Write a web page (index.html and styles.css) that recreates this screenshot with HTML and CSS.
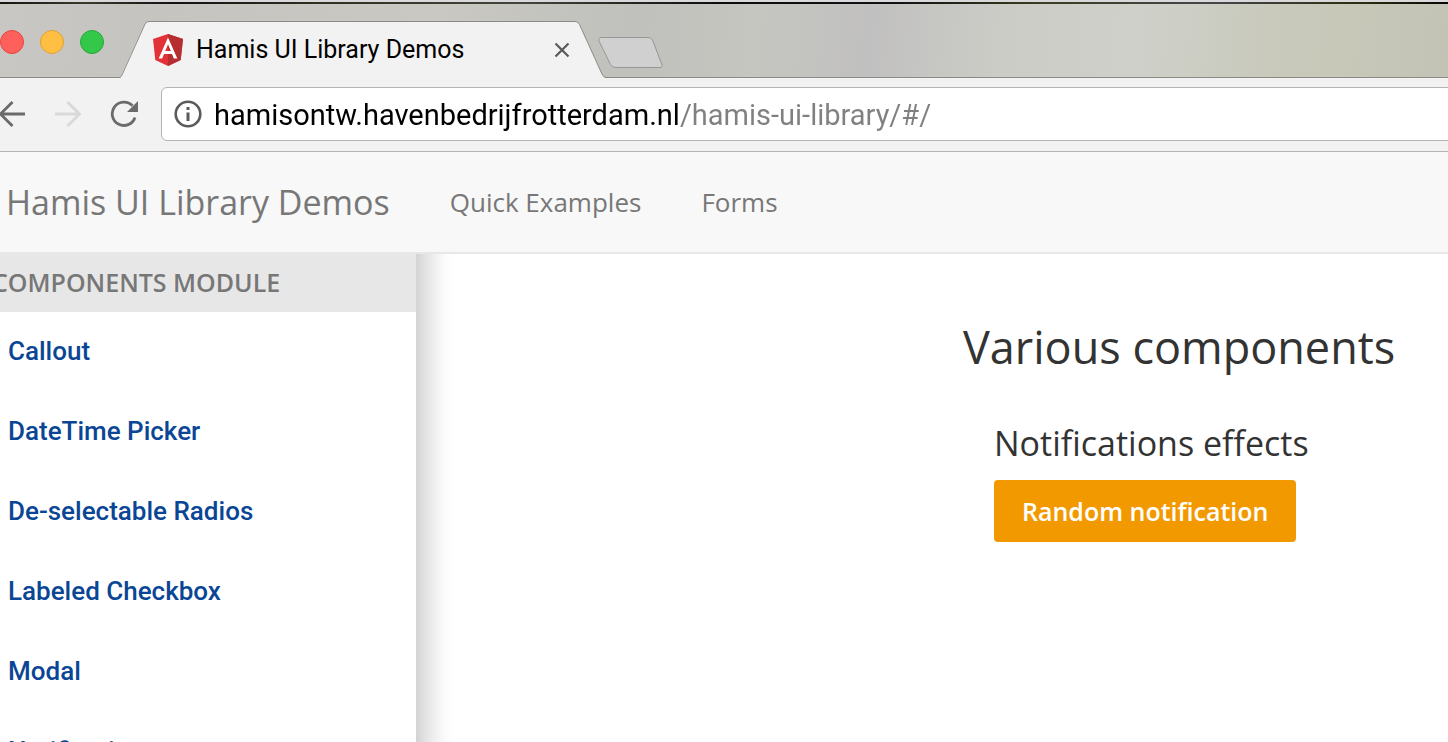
FILE: index.html
```
<!DOCTYPE html>
<html lang="en">

<head>
    <meta charset="UTF-8">
    <title>Hamis UI Library Demos</title>
    <link rel="stylesheet" href="styles.css">
</head>

<body>

    <div class="desktop"></div>

    <div class="titlebar">
        <div class="lights">
            <button class="light red" aria-label="Close"></button>
            <button class="light yellow" aria-label="Minimize"></button>
            <button class="light green" aria-label="Zoom"></button>
        </div>
        <div class="tab">
            <svg class="tab-shape" viewBox="0 0 486 57" preserveAspectRatio="none">
                <path d="M0 57 L24 4 Q25.500 .5 29 .5 H455 Q458.500 .5 460 4 L482 53 Q484 56.500 486 57 Z" fill="#f2f2f2" />
                <path d="M0 56.500 Q1 56 2 54 L25 3 Q26 .5 29 .5 H455 Q458 .5 459.500 3.500 L482 53 Q483.500 56.500 486 56.500" fill="none" stroke="#8a8a86" />
            </svg>
            <svg class="logo" viewBox="0 0 30 32">
                <path d="M15 0 L0 5 L2.300 26 L15 32 L27.700 26 L30 5 Z" fill="#e23237" />
                <path d="M15 0 V32 L27.700 26 L30 5 Z" fill="#b52e31" />
                <path d="M15 3.600 L5.700 24.500 H9.200 L11 20 H19 L20.800 24.500 H24.300 Z M15 10.300 L17.800 17 H12.200 Z" fill="#fff" fill-rule="evenodd" />
            </svg>
            <span class="tab-title">Hamis UI Library Demos</span>
            <button class="tab-close" aria-label="Close tab">
                <svg width="16" height="16" viewBox="0 0 16 16"><path d="M1.500 1.500 L14.500 14.500 M14.500 1.500 L1.500 14.500" stroke="#5a5a5a" stroke-width="2.200" /></svg>
            </button>
        </div>
        <button class="new-tab" aria-label="New tab">
            <svg width="66" height="32" viewBox="0 0 66 32"><path d="M4 .5 H50 Q53 .5 54.500 3 L64 28 Q65 30.500 62 30.500 H18 Q14 30.500 12.500 27.500 L1 4 Q0 .5 4 .5 Z" fill="#d0d0d0" stroke="#979795" /></svg>
        </button>
    </div>

    <div class="toolbar">
        <button class="tool" aria-label="Back">
            <svg width="26" height="26" viewBox="0 0 26 26"><path d="M25 13 H1 M12.500 1 L.5 13 L12.500 25" fill="none" stroke="#6b6b6b" stroke-width="2.800" /></svg>
        </button>
        <button class="tool" aria-label="Forward" disabled>
            <svg width="26" height="26" viewBox="0 0 26 26"><path d="M0 13 H24 M12.500 1 L24.500 13 L12.500 25" fill="none" stroke="#d9d9d9" stroke-width="2.800" /></svg>
        </button>
        <button class="tool" aria-label="Reload">
            <svg width="28" height="28" viewBox="0 0 28 28"><path d="M22.500 5.800 A11.700 11.700 0 1 0 25 17.500" fill="none" stroke="#6b6b6b" stroke-width="2.800" /><path d="M28 1 V12 H17 Z" fill="#6b6b6b" /></svg>
        </button>
        <div class="address">
            <svg width="28" height="28" viewBox="0 0 28 28"><circle cx="14" cy="14" r="12.300" fill="none" stroke="#5a5a5a" stroke-width="2.600" /><path d="M12.500 7 H15.500 V10 H12.500 Z M12.500 12.500 H15.500 V21 H12.500 Z" fill="#5a5a5a" /></svg>
            <input class="url" type="text" aria-label="Address" value="hamisontw.havenbedrijfrotterdam.nl/hamis-ui-library/#/">
        </div>
    </div>

    <nav class="navbar">
        <a class="brand" href="#">Hamis UI Library Demos</a>
        <a class="nav-link" href="#">Quick Examples</a>
        <a class="nav-link" href="#">Forms</a>
    </nav>

    <div class="page">
        <aside class="sidebar">
            <h2 class="sidebar-title">COMPONENTS MODULE</h2>
            <ul class="menu">
                <li><a href="#">Callout</a></li>
                <li><a href="#">DateTime Picker</a></li>
                <li><a href="#">De-selectable Radios</a></li>
                <li><a href="#">Labeled Checkbox</a></li>
                <li><a href="#">Modal</a></li>
                <li><a href="#">Notifications</a></li>
            </ul>
        </aside>
        <main class="content">
            <h1>Various components</h1>
            <section class="example">
                <h3>Notifications effects</h3>
                <button class="btn">Random notification</button>
            </section>
        </main>
    </div>

</body>

</html>
```
FILE: styles.css
```
* {
    box-sizing: border-box;
}

body {
    display: flex;
    flex-direction: column;
    height: 100vh;
    margin: 0;
    overflow: hidden;
    background: #fff;
    color: #333;
    font-family: "Open Sans", "Noto Sans", sans-serif;
    font-size: 26px;
}

button {
    padding: 0;
    border: 0;
    background: none;
    font: inherit;
}

svg {
    display: block;
}

a {
    text-decoration: none;
}

.desktop {
    flex: none;
    height: 4px;
    border-top: 2px solid #d9d9dc;
    background: linear-gradient(90deg, #14150f, #3a3a2c 6%, #111 12%, #2e2f20 22%, #44453a 36%, #0c0c0c 50%, #111 62%, #3c3c22 72%, #45464a 84%, #2c2d10 94%, #050505);
}

.titlebar {
    display: flex;
    flex: none;
    align-items: flex-end;
    height: 74px;
    border-bottom: 1px solid #8a8a86;
    background: linear-gradient(95deg, #c8c7c4, #c5c4c0 10%, #c9c8c3 30%, #c0c0bc 44%, #c5c6c0 52%, #c1c0c0 60%, #cbccc6 69%, #cfd0ca 78%, #c8c9ba 89%, #c8c8b9 93%, #c2c2b6);
}

.lights {
    display: flex;
    gap: 16px;
    width: 120px;
    padding-bottom: 23px;
}

.light {
    width: 24px;
    height: 24px;
    border: 1px solid #e2463f;
    border-radius: 50%;
    background: #ff605c;
}

.yellow {
    border-color: #e0a033;
    background: #ffbf43;
}

.green {
    border-color: #27a737;
    background: #34c84a;
}

.tab {
    position: relative;
    display: flex;
    align-items: center;
    width: 486px;
    height: 57px;
    margin-bottom: -1px;
    padding: 0 36px 0 33px;
}

.tab-shape {
    position: absolute;
    top: 0;
    left: 0;
    width: 100%;
    height: 100%;
}

.logo {
    position: relative;
    width: 30px;
    height: 32px;
}

.tab-title {
    position: relative;
    flex: 1;
    margin-left: 13px;
    color: #000;
    font-family: Roboto, sans-serif;
    font-size: 25px;
}

.tab-close {
    position: relative;
}

.new-tab {
    margin: 0 0 8px -8px;
}

.toolbar {
    display: flex;
    flex: none;
    align-items: center;
    height: 74px;
    padding-bottom: 2px;
    border-bottom: 1px solid #b4b4b4;
    background: #f2f2f2;
}

.tool {
    flex: none;
    margin-right: 29px;
}

.address {
    display: flex;
    flex: 1;
    align-items: center;
    gap: 12px;
    height: 54px;
    margin-right: -8px;
    margin-left: -6px;
    padding-left: 12px;
    border: 1px solid #b4b4b4;
    border-radius: 6px;
    background: #fff;
}

/* host name in black, the path in grey */
.url {
    flex: 1;
    padding: 2px 0 0;
    border: 0;
    outline: 0;
    background: linear-gradient(90deg, #000 465px, #808080 465px);
    -webkit-background-clip: text;
    background-clip: text;
    color: transparent;
    font-family: Roboto, sans-serif;
    font-size: 29px;
}

.navbar {
    display: flex;
    flex: none;
    align-items: center;
    gap: 60px;
    height: 102px;
    padding-left: 6px;
    border-bottom: 2px solid #e7e7e7;
    background: #f8f8f8;
}

.navbar a {
    color: #777;
}

.brand {
    font-size: 34px;
}

.page {
    display: flex;
    flex: 1;
    min-height: 0;
}

.sidebar {
    flex: none;
    width: 416px;
    overflow: hidden;
    background: #fff;
}

.sidebar-title {
    margin: 0 0 0 -8px;
    padding-bottom: 2px;
    background: #e7e7e7;
    color: #777;
    font-size: 25px;
    font-weight: 600;
    line-height: 56px;
}

.menu {
    margin: 0;
    padding: 0 8px;
    list-style: none;
    font-family: Roboto, sans-serif;
    font-weight: 500;
    line-height: 78px;
}

.menu a {
    display: block;
    padding-bottom: 2px;
    color: #0a4695;
}

/* shadow that the sidebar throws on the content */
.content {
    flex: 1;
    padding: 57px 50px 0 547px;
    background: linear-gradient(90deg, #d3d3d3, #e2e2e2 9px, #f1f1f1 20px, #fbfbfb 29px, #fff 38px);
    white-space: nowrap;
}

h1 {
    margin: 0;
    font-size: 45px;
    font-weight: 400;
    line-height: 72px;
}

.example {
    padding: 40px 31px;
}

h3 {
    margin: 0;
    font-size: 34px;
    font-weight: 400;
    line-height: 40px;
}

.btn {
    height: 62px;
    margin-top: 17px;
    padding: 0 28px;
    border-radius: 4px;
    background: #f39900;
    color: #fff;
    font-size: 25px;
    font-weight: 600;
}
```
